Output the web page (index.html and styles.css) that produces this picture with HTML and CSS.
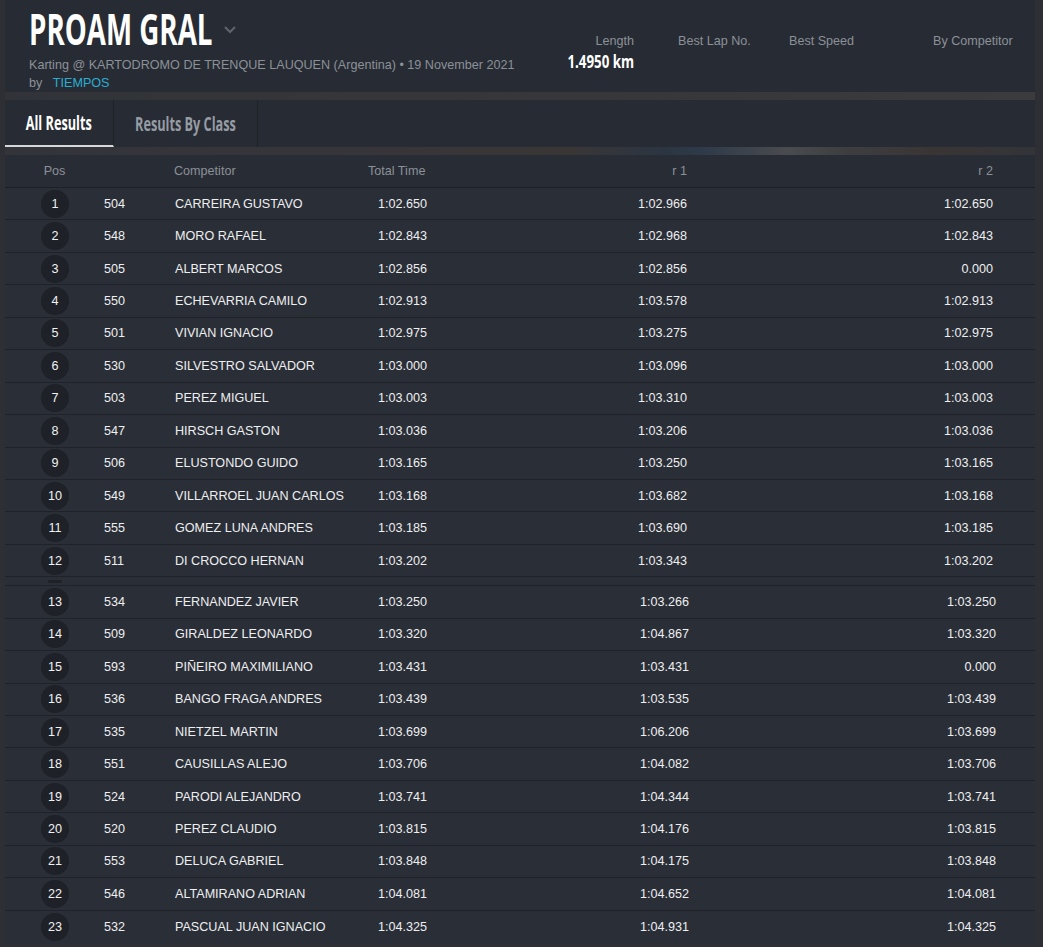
FILE: index.html
```html
<!DOCTYPE html>
<html lang="en">
<head>
<meta charset="utf-8">
<title>PROAM GRAL - Results</title>
<link rel="stylesheet" href="styles.css">
</head>
<body>
<div class="page">
  <header class="header">
    <div class="header-main">
      <h1 class="title"><span class="title-box"><span class="title-text">PROAM GRAL</span></span>
        <svg class="chev" width="14" height="10" viewBox="0 0 14 10"><polyline points="2,2 7,7 12,2" fill="none" stroke="#5f656d" stroke-width="2"/></svg>
      </h1>
      <div class="sub">Karting @ KARTODROMO DE TRENQUE LAUQUEN (Argentina) • 19 November 2021</div>
      <div class="sub">by <a class="org" href="#">TIEMPOS</a></div>
    </div>
    <div class="stats">
      <div class="stat stat-len">
        <div class="stat-label">Length</div>
        <div class="stat-value"><span class="cond-r">1.4950 km</span></div>
      </div>
      <div class="stat stat-lap"><div class="stat-label">Best Lap No.</div></div>
      <div class="stat stat-speed"><div class="stat-label">Best Speed</div></div>
      <div class="stat stat-comp"><div class="stat-label">By Competitor</div></div>
    </div>
  </header>
  <div class="gap"></div>
  <nav class="tabs">
    <div class="tab tab-active"><span class="cond-c">All Results</span></div>
    <div class="tab tab-class"><span class="cond-c">Results By Class</span></div>
    <div class="tab-rest"></div>
  </nav>
  <div class="gap gap2"></div>
  <div class="table">
    <div class="row head">
      <div class="c-pos">Pos</div><div class="c-num"></div><div class="c-name">Competitor</div><div class="c-total">Total Time</div><div class="c-r">r 1</div><div class="c-r">r 2</div>
    </div>
    <div class="row"><div class="c-pos"><span class="pos">1</span></div><div class="c-num">504</div><div class="c-name">CARREIRA GUSTAVO</div><div class="c-total">1:02.650</div><div class="c-r">1:02.966</div><div class="c-r">1:02.650</div></div>
    <div class="row"><div class="c-pos"><span class="pos">2</span></div><div class="c-num">548</div><div class="c-name">MORO RAFAEL</div><div class="c-total">1:02.843</div><div class="c-r">1:02.968</div><div class="c-r">1:02.843</div></div>
    <div class="row"><div class="c-pos"><span class="pos">3</span></div><div class="c-num">505</div><div class="c-name">ALBERT MARCOS</div><div class="c-total">1:02.856</div><div class="c-r">1:02.856</div><div class="c-r">0.000</div></div>
    <div class="row"><div class="c-pos"><span class="pos">4</span></div><div class="c-num">550</div><div class="c-name">ECHEVARRIA CAMILO</div><div class="c-total">1:02.913</div><div class="c-r">1:03.578</div><div class="c-r">1:02.913</div></div>
    <div class="row"><div class="c-pos"><span class="pos">5</span></div><div class="c-num">501</div><div class="c-name">VIVIAN IGNACIO</div><div class="c-total">1:02.975</div><div class="c-r">1:03.275</div><div class="c-r">1:02.975</div></div>
    <div class="row"><div class="c-pos"><span class="pos">6</span></div><div class="c-num">530</div><div class="c-name">SILVESTRO SALVADOR</div><div class="c-total">1:03.000</div><div class="c-r">1:03.096</div><div class="c-r">1:03.000</div></div>
    <div class="row"><div class="c-pos"><span class="pos">7</span></div><div class="c-num">503</div><div class="c-name">PEREZ MIGUEL</div><div class="c-total">1:03.003</div><div class="c-r">1:03.310</div><div class="c-r">1:03.003</div></div>
    <div class="row"><div class="c-pos"><span class="pos">8</span></div><div class="c-num">547</div><div class="c-name">HIRSCH GASTON</div><div class="c-total">1:03.036</div><div class="c-r">1:03.206</div><div class="c-r">1:03.036</div></div>
    <div class="row"><div class="c-pos"><span class="pos">9</span></div><div class="c-num">506</div><div class="c-name">ELUSTONDO GUIDO</div><div class="c-total">1:03.165</div><div class="c-r">1:03.250</div><div class="c-r">1:03.165</div></div>
    <div class="row"><div class="c-pos"><span class="pos">10</span></div><div class="c-num">549</div><div class="c-name">VILLARROEL JUAN CARLOS</div><div class="c-total">1:03.168</div><div class="c-r">1:03.682</div><div class="c-r">1:03.168</div></div>
    <div class="row"><div class="c-pos"><span class="pos">11</span></div><div class="c-num">555</div><div class="c-name">GOMEZ LUNA ANDRES</div><div class="c-total">1:03.185</div><div class="c-r">1:03.690</div><div class="c-r">1:03.185</div></div>
    <div class="row"><div class="c-pos"><span class="pos">12</span></div><div class="c-num">511</div><div class="c-name">DI CROCCO HERNAN</div><div class="c-total">1:03.202</div><div class="c-r">1:03.343</div><div class="c-r">1:03.202</div></div>
    <div class="seam"><span class="seam-pill"></span></div>
    <div class="row shifted"><div class="c-pos"><span class="pos">13</span></div><div class="c-num">534</div><div class="c-name">FERNANDEZ JAVIER</div><div class="c-total">1:03.250</div><div class="c-r">1:03.266</div><div class="c-r">1:03.250</div></div>
    <div class="row shifted"><div class="c-pos"><span class="pos">14</span></div><div class="c-num">509</div><div class="c-name">GIRALDEZ LEONARDO</div><div class="c-total">1:03.320</div><div class="c-r">1:04.867</div><div class="c-r">1:03.320</div></div>
    <div class="row shifted"><div class="c-pos"><span class="pos">15</span></div><div class="c-num">593</div><div class="c-name">PIÑEIRO MAXIMILIANO</div><div class="c-total">1:03.431</div><div class="c-r">1:03.431</div><div class="c-r">0.000</div></div>
    <div class="row shifted"><div class="c-pos"><span class="pos">16</span></div><div class="c-num">536</div><div class="c-name">BANGO FRAGA ANDRES</div><div class="c-total">1:03.439</div><div class="c-r">1:03.535</div><div class="c-r">1:03.439</div></div>
    <div class="row shifted"><div class="c-pos"><span class="pos">17</span></div><div class="c-num">535</div><div class="c-name">NIETZEL MARTIN</div><div class="c-total">1:03.699</div><div class="c-r">1:06.206</div><div class="c-r">1:03.699</div></div>
    <div class="row shifted"><div class="c-pos"><span class="pos">18</span></div><div class="c-num">551</div><div class="c-name">CAUSILLAS ALEJO</div><div class="c-total">1:03.706</div><div class="c-r">1:04.082</div><div class="c-r">1:03.706</div></div>
    <div class="row shifted"><div class="c-pos"><span class="pos">19</span></div><div class="c-num">524</div><div class="c-name">PARODI ALEJANDRO</div><div class="c-total">1:03.741</div><div class="c-r">1:04.344</div><div class="c-r">1:03.741</div></div>
    <div class="row shifted"><div class="c-pos"><span class="pos">20</span></div><div class="c-num">520</div><div class="c-name">PEREZ CLAUDIO</div><div class="c-total">1:03.815</div><div class="c-r">1:04.176</div><div class="c-r">1:03.815</div></div>
    <div class="row shifted"><div class="c-pos"><span class="pos">21</span></div><div class="c-num">553</div><div class="c-name">DELUCA GABRIEL</div><div class="c-total">1:03.848</div><div class="c-r">1:04.175</div><div class="c-r">1:03.848</div></div>
    <div class="row shifted"><div class="c-pos"><span class="pos">22</span></div><div class="c-num">546</div><div class="c-name">ALTAMIRANO ADRIAN</div><div class="c-total">1:04.081</div><div class="c-r">1:04.652</div><div class="c-r">1:04.081</div></div>
    <div class="row shifted last"><div class="c-pos"><span class="pos">23</span></div><div class="c-num">532</div><div class="c-name">PASCUAL JUAN IGNACIO</div><div class="c-total">1:04.325</div><div class="c-r">1:04.931</div><div class="c-r">1:04.325</div></div>
  </div>
</div>
</body>
</html>
```

FILE: styles.css
```css
html, body {
  margin: 0;
  padding: 0;
}
body {
  background: #2d2f35;
  font-family: "Liberation Sans", Arial, sans-serif;
  font-size: 12.6px;
  color: #eeeff0;
  overflow: hidden;
}
.page {
  padding: 0 8px 0 5px;
}

/* Header */
.header {
  height: 92px;
  background: #272b33;
  display: flex;
}
.header-main {
  width: 511px;
  padding-left: 24px;
  padding-top: 7px;
}
.title {
  margin: 0;
  height: 43px;
  display: flex;
  align-items: center;
  font-family: "Open Sans", "DejaVu Sans", sans-serif;
  font-weight: 700;
  font-size: 43px;
  line-height: 43px;
  color: #ffffff;
}
.title-box {
  display: inline-block;
  width: 184px;
  white-space: nowrap;
}
.title-text {
  display: inline-block;
  transform: scaleX(0.645);
  transform-origin: left center;
}
.chev {
  margin-left: 10px;
  margin-top: 2px;
}
.sub {
  line-height: 18px;
  color: #8b9198;
}
.title + .sub {
  margin-top: 6px;
}
.org {
  color: #2aaed3;
  text-decoration: none;
  margin-left: 7px;
}

.stats {
  display: flex;
  padding-top: 32px;
  color: #8b9198;
}
.stat-label {
  line-height: 18px;
  white-space: nowrap;
}
.stat-len {
  width: 94px;
  text-align: right;
}
.stat-lap {
  width: 111px;
  margin-left: 44px;
}
.stat-speed {
  width: 144px;
}
.stat-comp {
  width: 102px;
}
.stat-value {
  height: 22px;
  line-height: 22px;
  font-family: "Open Sans", "DejaVu Sans", sans-serif;
  font-weight: 700;
  font-size: 18px;
  color: #ffffff;
  white-space: nowrap;
}
.cond-r {
  display: inline-block;
  transform: scaleX(0.74);
  transform-origin: right center;
}

/* gaps showing background */
.gap {
  height: 8px;
  background: linear-gradient(90deg, #323338 0%, #36363a 40%, #38373a 70%, #3b3a3d 100%);
}
.gap2 {
  background: linear-gradient(90deg, #33343a 0%, #36353a 30%, #3a3636 55%, #2b3542 64%, #2f3b4a 68%, #4a4b4e 76%, #3d3d40 82%, #3a3535 90%, #333438 100%);
}

/* Tabs */
.tabs {
  height: 47px;
  background: #272b33;
  display: flex;
}
.tab {
  height: 47px;
  box-sizing: border-box;
  display: flex;
  align-items: center;
  justify-content: center;
  font-family: "Open Sans", "DejaVu Sans", sans-serif;
  font-weight: 700;
  font-size: 19.5px;
  color: #969ca4;
  border-right: 1px solid #20232a;
  white-space: nowrap;
}
.tab-active {
  width: 109px;
  color: #ffffff;
  border-bottom: 2px solid #d6d7d9;
}
.tab-class {
  width: 144px;
}
.cond-c {
  display: inline-block;
  transform: scaleX(0.65);
  transform-origin: center center;
}
.tab-rest {
  flex: 1;
}

/* Table */
.table {
  background: #2a2e37;
}
.row {
  display: grid;
  grid-template-columns: 99px 70px 194px 120px 199px 306px;
  padding-right: 42px;
  height: 32.45px;
  box-sizing: border-box;
  align-items: center;
  border-bottom: 1px solid #1f2228;
  white-space: nowrap;
}
.row.shifted {
  grid-template-columns: 99px 70px 194px 120px 201px 307px;
  padding-right: 39px;
}
.row.last {
  border-bottom: none;
  height: 33px;
}
.row.head {
  height: 33px;
  background: #282c34;
  color: #8b9198;
  border-bottom: 1px solid #1d2026;
}
.c-pos {
  text-align: center;
  display: flex;
  justify-content: center;
}
.c-name {
  padding-left: 1px;
}
.head .c-name {
  padding-left: 0;
}
.c-total {
  padding-left: 10px;
}
.head .c-total {
  padding-left: 0;
}
.c-r {
  text-align: right;
}
.pos {
  width: 28px;
  height: 28px;
  border-radius: 50%;
  background: #1e2127;
  color: #f2f2f2;
  display: flex;
  align-items: center;
  justify-content: center;
  margin-left: 1px;
}
.seam {
  height: 9px;
  box-sizing: border-box;
  border-bottom: 1px solid #1f2228;
  position: relative;
}
.seam-pill {
  position: absolute;
  left: 43px;
  top: 3px;
  width: 14px;
  height: 3px;
  border-radius: 2px;
  background: #1e2127;
}
```
